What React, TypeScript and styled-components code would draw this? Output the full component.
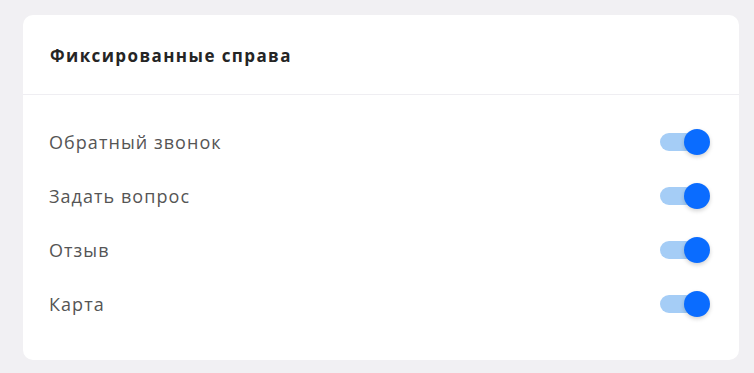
import React, {useState} from 'react';
import styled, {createGlobalStyle} from 'styled-components';

const GlobalStyle = createGlobalStyle`
  body {
    margin: 0;
    background: #f1f0f3;
    font-family: "Open Sans", "Noto Sans", sans-serif;
  }
`;

const items = ['Обратный звонок', 'Задать вопрос', 'Отзыв', 'Карта'];

const Toggle = ({on, onClick}: {on: boolean; onClick: () => void}) => (
  <Styled.Track $on={on} onClick={onClick}>
    <Styled.Thumb $on={on} />
  </Styled.Track>
);

export default function App() {
  const [state, setState] = useState(items.map(() => true));

  return (
    <Styled.Page>
      <GlobalStyle />
      <Styled.Card>
        <Styled.Header>
          <Styled.Title>Фиксированные справа</Styled.Title>
        </Styled.Header>
        <Styled.List>
          {items.map((label, i) => (
            <Styled.Row key={label}>
              <Styled.Label>{label}</Styled.Label>
              <Toggle
                on={state[i]}
                onClick={() =>
                  setState(s => s.map((v, j) => (j === i ? !v : v)))
                }
              />
            </Styled.Row>
          ))}
        </Styled.List>
      </Styled.Card>
    </Styled.Page>
  );
}

const Styled = {
  Page: styled.div`
    padding: 15px 15px 14px 23px;
  `,
  Card: styled.div`
    width: 716px;
    background: #ffffff;
    border-radius: 10px;
  `,
  Header: styled.div`
    height: 80px;
    display: flex;
    align-items: center;
    padding: 1px 27px 0;
    box-sizing: border-box;
    border-bottom: 1px solid #efeef2;
  `,
  Title: styled.h3`
    margin: 0;
    font-size: 17px;
    font-weight: 700;
    color: #252525;
    letter-spacing: 1.4px;
  `,
  List: styled.div`
    display: flex;
    flex-direction: column;
    padding: 20px 28px 29px 26px;
  `,
  Row: styled.div`
    height: 54px;
    display: flex;
    align-items: center;
    justify-content: space-between;
  `,
  Label: styled.span`
    font-size: 18px;
    color: #555555;
    letter-spacing: 1.05px;
  `,
  Track: styled.div<{$on: boolean}>`
    position: relative;
    width: 48px;
    height: 18px;
    border-radius: 9px;
    background: ${p => (p.$on ? '#a5cdf6' : '#d6d6dc')};
    cursor: pointer;
    margin-right: 3px;
  `,
  Thumb: styled.div<{$on: boolean}>`
    position: absolute;
    top: -4px;
    left: ${p => (p.$on ? '24px' : '-3px')};
    width: 26px;
    height: 26px;
    border-radius: 50%;
    background: ${p => (p.$on ? '#0a6cff' : '#ffffff')};
    box-shadow: 0 2px 4px rgba(0, 0, 0, 0.18);
  `,
};
